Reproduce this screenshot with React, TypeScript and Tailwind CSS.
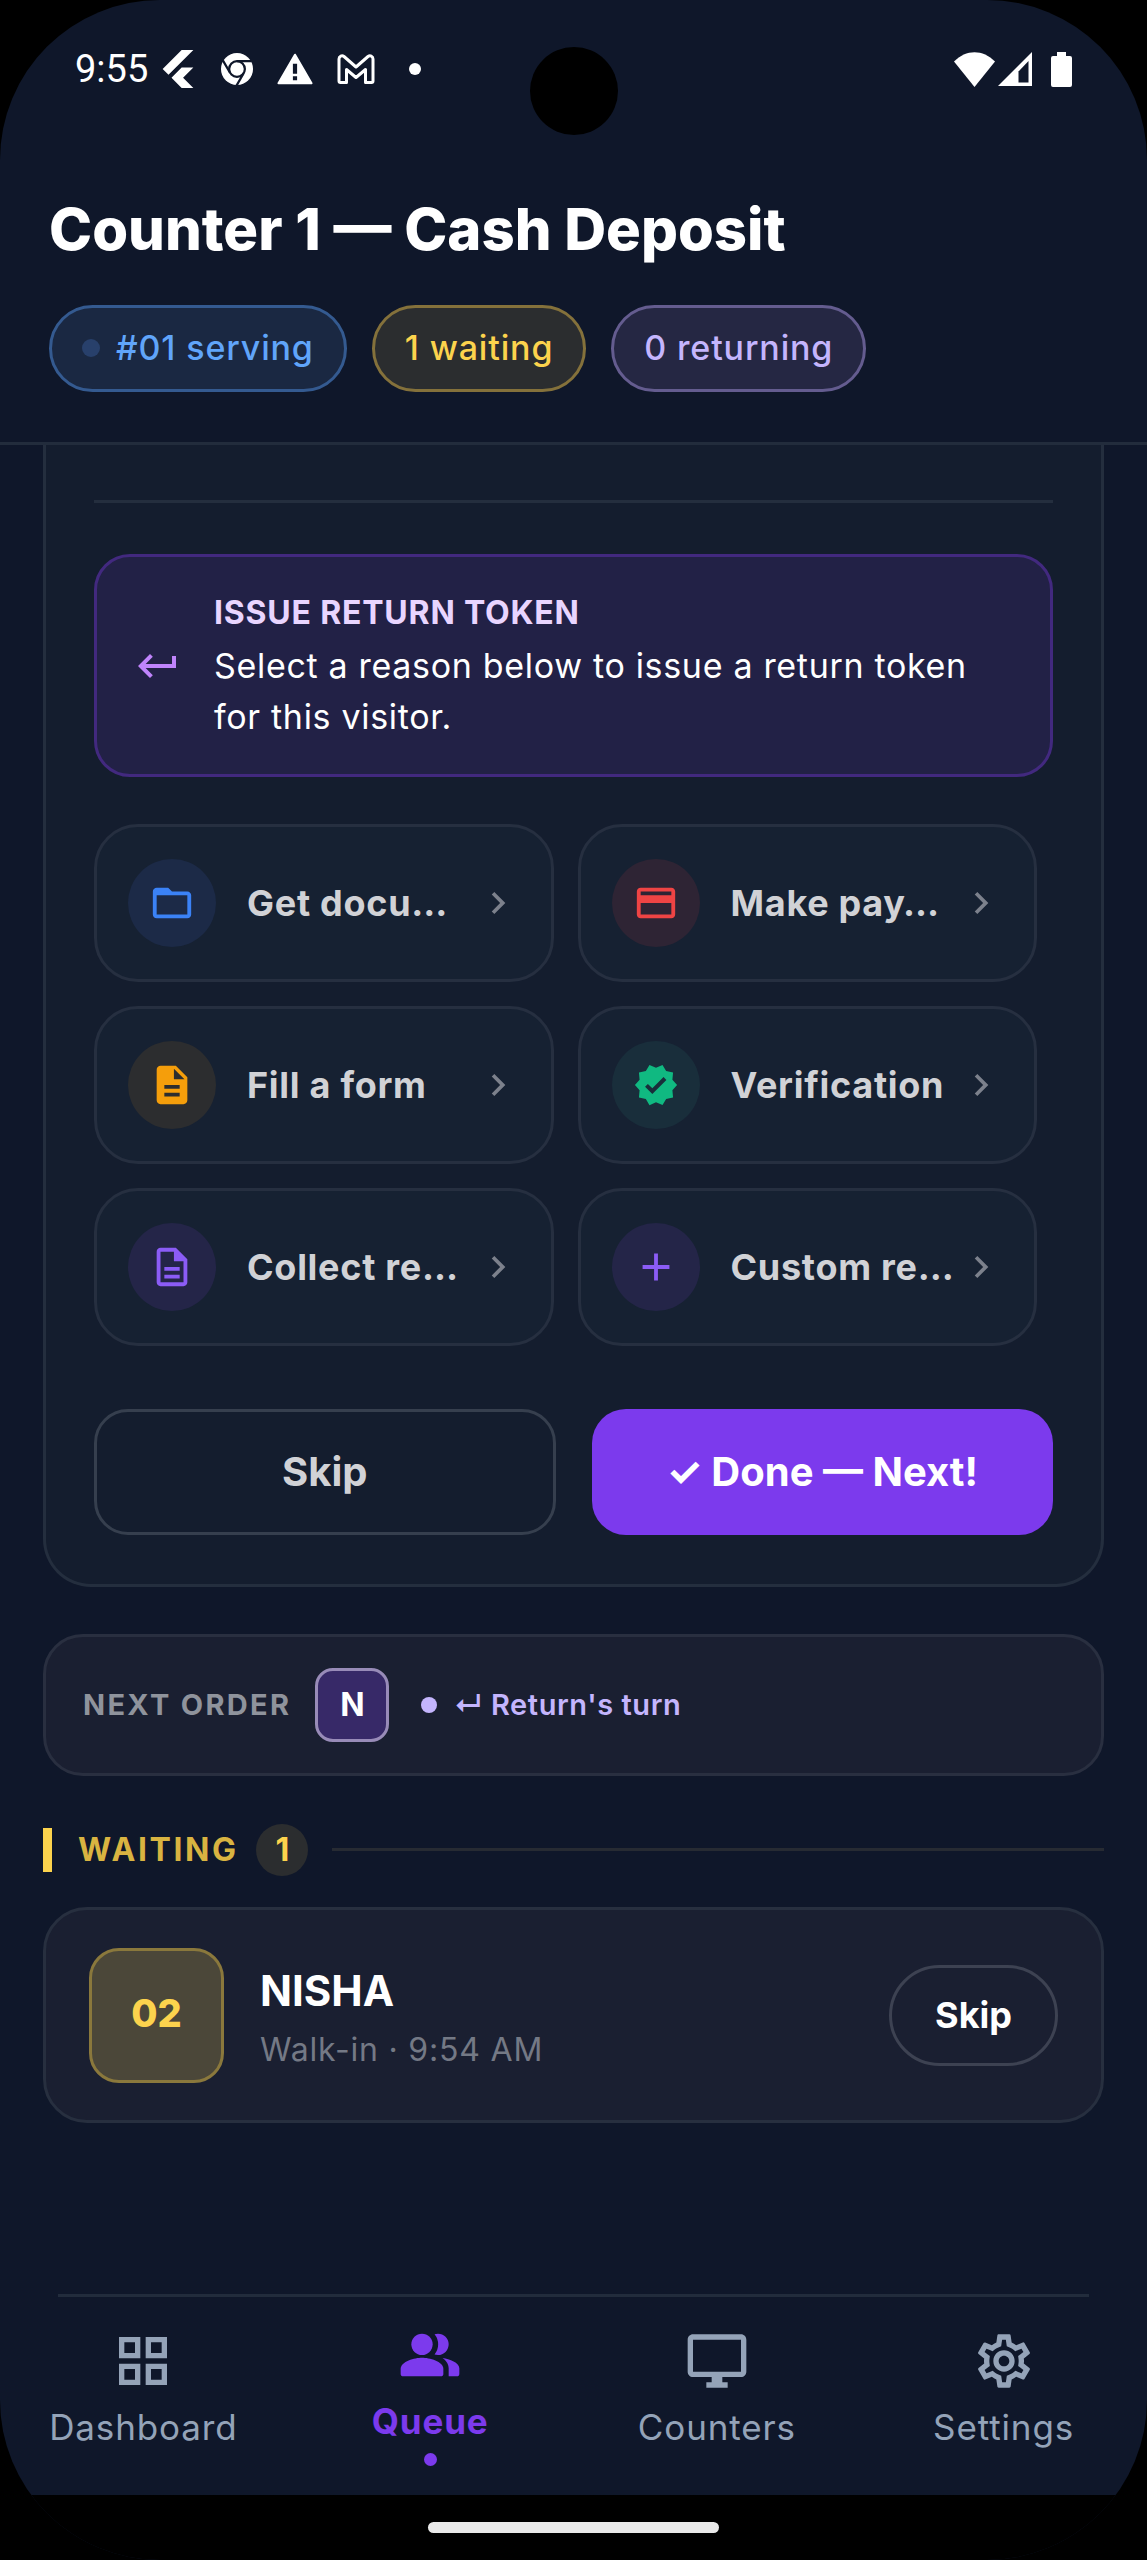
import React from "react";
import clsx from "clsx";
import { IconType } from "react-icons";
import {
  MdAdd,
  MdChevronRight,
  MdCreditCard,
  MdDescription,
  MdFolderOpen,
  MdKeyboardReturn,
  MdOutlineDescription,
  MdOutlineDesktopWindows,
  MdOutlineGridView,
  MdOutlineSettings,
  MdVerified,
} from "react-icons/md";

interface IReason {
  label: string;
  icon: IconType;
  color: string;
}

const reasons: Array<IReason> = [
  { label: "Get docu…", icon: MdFolderOpen, color: "bg-[#1c2a47] text-[#3b82f6]" },
  { label: "Make pay…", icon: MdCreditCard, color: "bg-[#2e2434] text-[#ef4444]" },
  { label: "Fill a form", icon: MdDescription, color: "bg-[#2c2d2f] text-[#f59e0b]" },
  { label: "Verification", icon: MdVerified, color: "bg-[#192e3b] text-[#10b981]" },
  { label: "Collect re…", icon: MdOutlineDescription, color: "bg-[#242548] text-[#8b5cf6]" },
  { label: "Custom re…", icon: MdAdd, color: "bg-[#242548] text-[#8b5cf6]" },
];

function FlutterIcon() {
  return (
    <svg viewBox="2 0 20 24" className="h-[38px] w-8" fill="currentColor">
      <path d="M14.3 0 2.3 12 6 15.7 21.7 0ZM14.3 11.1 7.9 17.5l6.4 6.5h7.4l-6.5-6.5 6.5-6.4Z" />
    </svg>
  );
}

function ChromeIcon() {
  return (
    <svg viewBox="0 0 24 24" className="size-8">
      <circle cx="12" cy="12" r="12" fill="currentColor" />
      <g fill="none" stroke="#0f172a" strokeWidth="1.7">
        <circle cx="12" cy="12" r="5.9" />
        <path d="M12 6.1H23M6.9 15 1.4 5.5M17.1 15 11.6 24.5" />
      </g>
    </svg>
  );
}

function WarningIcon() {
  return (
    <svg viewBox="0 0 24 21" className="h-8 w-9">
      <path
        d="M12 1 23 20H1Z"
        fill="currentColor"
        stroke="currentColor"
        strokeWidth="1.4"
        strokeLinejoin="round"
      />
      <path d="M10.6 7h2.8v6.6h-2.8ZM10.6 15.4h2.8V18h-2.8Z" fill="#0f172a" />
    </svg>
  );
}

function MailIcon() {
  return (
    <svg
      viewBox="0 0 38 30"
      className="h-[30px] w-[38px]"
      fill="none"
      stroke="currentColor"
      strokeWidth="3"
      strokeLinejoin="round"
    >
      <path d="M2 5v22a1.500 1.500 0 0 0 1.500 1.500h6V15.500L19 23.500l9.500-8v13h6A1.500 1.500 0 0 0 36 27V5c0-3-3-4-5-2.500L19 13 7 2.500C5 1 2 2 2 5Z" />
    </svg>
  );
}

function WifiIcon() {
  return (
    <svg viewBox="0 0 41 35" className="h-[35px] w-[41px]" fill="currentColor">
      <path d="M20.500 35 0 9.500C12-3 29-3 41 9.500Z" />
    </svg>
  );
}

function SignalIcon() {
  return (
    <svg viewBox="0 0 34 34" className="size-[34px]">
      <path d="M0 34 34 0v34Z" fill="currentColor" />
      <path d="M20.500 19.500 30.500 9v21.500h-10Z" fill="#0f172a" />
    </svg>
  );
}

function BatteryIcon() {
  return (
    <svg viewBox="0 0 21 35" className="h-[35px] w-[21px]" fill="currentColor">
      <path d="M6 0h9v4h4a2 2 0 0 1 2 2v27a2 2 0 0 1-2 2H2a2 2 0 0 1-2-2V6a2 2 0 0 1 2-2h4Z" />
    </svg>
  );
}

function QueueIcon({ className }: { className?: string }) {
  return (
    <svg viewBox="0 0 24 24" className={className} fill="currentColor">
      <circle cx="9" cy="8" r="4" />
      <path d="M9 13c-2.700 0-8 1.300-8 4.200V19a1 1 0 0 0 1 1h14a1 1 0 0 0 1-1v-1.800C17 14.300 11.700 13 9 13Z" />
      <path d="M15 12a4 4 0 0 0 0-8c-.5 0-.9.1-1.300.2A6 6 0 0 1 13.700 11.800c.4.1.8.2 1.300.2Z" />
      <path d="M16.700 13.100C18 14.100 19 15.300 19 17v3h3a1 1 0 0 0 1-1v-2c0-2.200-3.600-3.500-6.300-3.900Z" />
    </svg>
  );
}

const tabs = [
  { label: "Dashboard", icon: MdOutlineGridView },
  { label: "Queue", icon: QueueIcon, active: true },
  { label: "Counters", icon: MdOutlineDesktopWindows },
  { label: "Settings", icon: MdOutlineSettings },
];

function StatusBar() {
  return (
    <div className="relative flex h-[138px] items-center justify-between px-[75px] text-white">
      <div className="flex items-center">
        <span className="mr-[14px] font-[Roboto,sans-serif] text-[38px] leading-none">9:55</span>
        <FlutterIcon />
        <div className="ml-[27px] flex items-center gap-6">
          <ChromeIcon />
          <WarningIcon />
          <MailIcon />
        </div>
        <span className="ml-[34px] size-3 rounded-full bg-white" />
      </div>
      <span className="absolute top-[47px] left-1/2 size-[88px] -translate-x-1/2 rounded-full bg-black" />
      <div className="flex items-center">
        <WifiIcon />
        <span className="mr-[19px] ml-[3px]">
          <SignalIcon />
        </span>
        <BatteryIcon />
      </div>
    </div>
  );
}

function Chip({ className, children }: { className: string; children: React.ReactNode }) {
  return (
    <span
      className={clsx(
        "flex h-[87px] items-center gap-4 rounded-full border-3 px-[30px] pb-0.5 text-[34px] font-medium tracking-wide",
        className
      )}
    >
      {children}
    </span>
  );
}

function ReasonButton({ reason }: { reason: IReason }) {
  const Icon = reason.icon;
  return (
    <button
      type="button"
      className="flex h-[158px] min-w-0 items-center rounded-[44px] border-3 border-[#262f40] bg-[#162132] px-[31px] text-left"
    >
      <span className={clsx("flex size-[88px] shrink-0 items-center justify-center rounded-full", reason.color)}>
        <Icon className="size-[46px]" />
      </span>
      <span className="ml-[31px] min-w-0 flex-1 text-[36px] font-bold tracking-[0.02em] whitespace-nowrap text-[#d1d2d6]">
        {reason.label}
      </span>
      <MdChevronRight className="size-11 shrink-0 text-[#7c818c]" />
    </button>
  );
}

export default function App() {
  return (
    <div className="bg-black font-[Inter,sans-serif]">
      <div className="flex min-h-screen flex-col overflow-hidden rounded-[160px] bg-[#0f172a]">
        <header className="border-b-3 border-[#222c3c] pb-[50px]">
          <StatusBar />
          <div className="px-[49px] pt-[59px]">
            <h1 className="text-[58px] leading-16 font-extrabold text-white">Counter 1 — Cash Deposit</h1>
            <div className="mt-11 flex gap-[25px]">
              <Chip className="border-[#345a90] bg-[#1a2842] text-[#60a5fa]">
                <span className="size-[18px] rounded-full bg-[#28406b]" />
                #01 serving
              </Chip>
              <Chip className="border-[#84713b] bg-[#2b2d2f] text-[#fcd34d]">1 waiting</Chip>
              <Chip className="border-[#645c8f] bg-[#252743] text-[#c4b5fd]">0 returning</Chip>
            </div>
          </div>
        </header>

        <main className="flex-1 px-[43px]">
          <section className="rounded-b-[48px] border-3 border-t-0 border-[#242e3e] bg-[#141d2e] px-12 pt-[55px] pb-[49px]">
            <hr className="border-t-3 border-[#242e3e]" />

            <div className="mt-[51px] flex items-center gap-8 rounded-[36px] border-3 border-[#42297f] bg-[#222146] px-[37px] py-8">
              <MdKeyboardReturn className="size-12 shrink-0 text-[#c084fc]" />
              <div>
                <h2 className="text-[32px] leading-12 font-bold tracking-wide text-[#e9d5ff]">
                  ISSUE RETURN TOKEN
                </h2>
                <p className="mt-[3px] text-[34px] leading-[51px] tracking-[0.02em] text-white">
                  Select a reason below to issue a return token for this visitor.
                </p>
              </div>
            </div>

            <div className="mt-[47px] grid grid-cols-2 gap-6 pr-4">
              {reasons.map((reason) => (
                <ReasonButton key={reason.label} reason={reason} />
              ))}
            </div>

            <div className="mt-[63px] grid grid-cols-2 gap-9 text-[40px] font-bold">
              <button type="button" className="h-[126px] rounded-[34px] border-3 border-[#363f4e] text-[#d1d2d6]">
                Skip
              </button>
              <button type="button" className="h-[126px] rounded-[34px] bg-[#7c3aed] text-white">
                ✓ Done — Next!
              </button>
            </div>
          </section>

          <section className="mt-[47px] flex h-[142px] items-center rounded-[40px] border-3 border-[#292f40] bg-[#1a1f31] px-[37px]">
            <span className="text-[29px] font-bold tracking-[0.08em] text-[#8f939c]">NEXT ORDER</span>
            <span className="ml-6 flex size-[74px] items-center justify-center rounded-[18px] border-3 border-[#988bb8] bg-[#372968] text-[32px] font-bold text-white">
              N
            </span>
            <span className="ml-8 size-4 rounded-full bg-[#c4b5fd]" />
            <span className="ml-4 text-[29px] font-semibold tracking-[0.02em] text-[#c4b5fd]">
              ↵ Return's turn
            </span>
          </section>

          <section className="mt-[47px]">
            <div className="flex h-[53px] items-center">
              <span className="h-11 w-[9px] bg-[#fcd34d]" />
              <h2 className="ml-[26px] text-[32px] font-bold tracking-[0.08em] text-[#d9b441]">WAITING</h2>
              <span className="ml-[18px] flex size-[52px] items-center justify-center rounded-full bg-[#2b2d2f] text-[32px] font-bold text-[#fcd34d]">
                1
              </span>
              <span className="ml-6 h-[3px] flex-1 bg-[#272b33]" />
            </div>

            <div className="mt-[31px] flex h-[216px] items-center rounded-[44px] border-3 border-[#272f3f] bg-[#1a1f31] px-[43px]">
              <span className="flex size-[135px] items-center justify-center rounded-[30px] border-3 border-[#8a783c] bg-[#4b4739] pb-1 text-[38px] font-extrabold text-[#fcd34d]">
                02
              </span>
              <div className="ml-9 flex-1 pt-2">
                <p className="text-[42px] leading-[58px] font-bold text-white">NISHA</p>
                <p className="mt-[3px] text-[32px] leading-[54px] tracking-wide text-[#747985]">
                  Walk-in · 9:54 AM
                </p>
              </div>
              <button
                type="button"
                className="h-[101px] rounded-full border-3 border-[#3d4252] px-[43px] text-[36px] font-bold text-white"
              >
                Skip
              </button>
            </div>
          </section>
        </main>

        <hr className="mx-[58px] border-t-3 border-[#222c3c]" />
        <nav className="grid h-[198px] grid-cols-4">
          {tabs.map(({ label, icon: Icon, active }) => (
            <a
              key={label}
              href="#"
              className={clsx(
                "flex flex-col items-center text-[35px] leading-11 tracking-wide",
                active ? "pt-[26px] font-bold text-[#7c3aed]" : "pt-8 text-[#94a3b8]"
              )}
            >
              <Icon className="size-16" />
              <span className="mt-3">{label}</span>
              {active && <span className="mt-2.5 size-[13px] rounded-full bg-[#7c3aed]" />}
            </a>
          ))}
        </nav>

        <div className="flex h-[65px] justify-center bg-black pt-[27px]">
          <span className="h-[11px] w-[291px] rounded-full bg-[#eaeaea]" />
        </div>
      </div>
    </div>
  );
}
